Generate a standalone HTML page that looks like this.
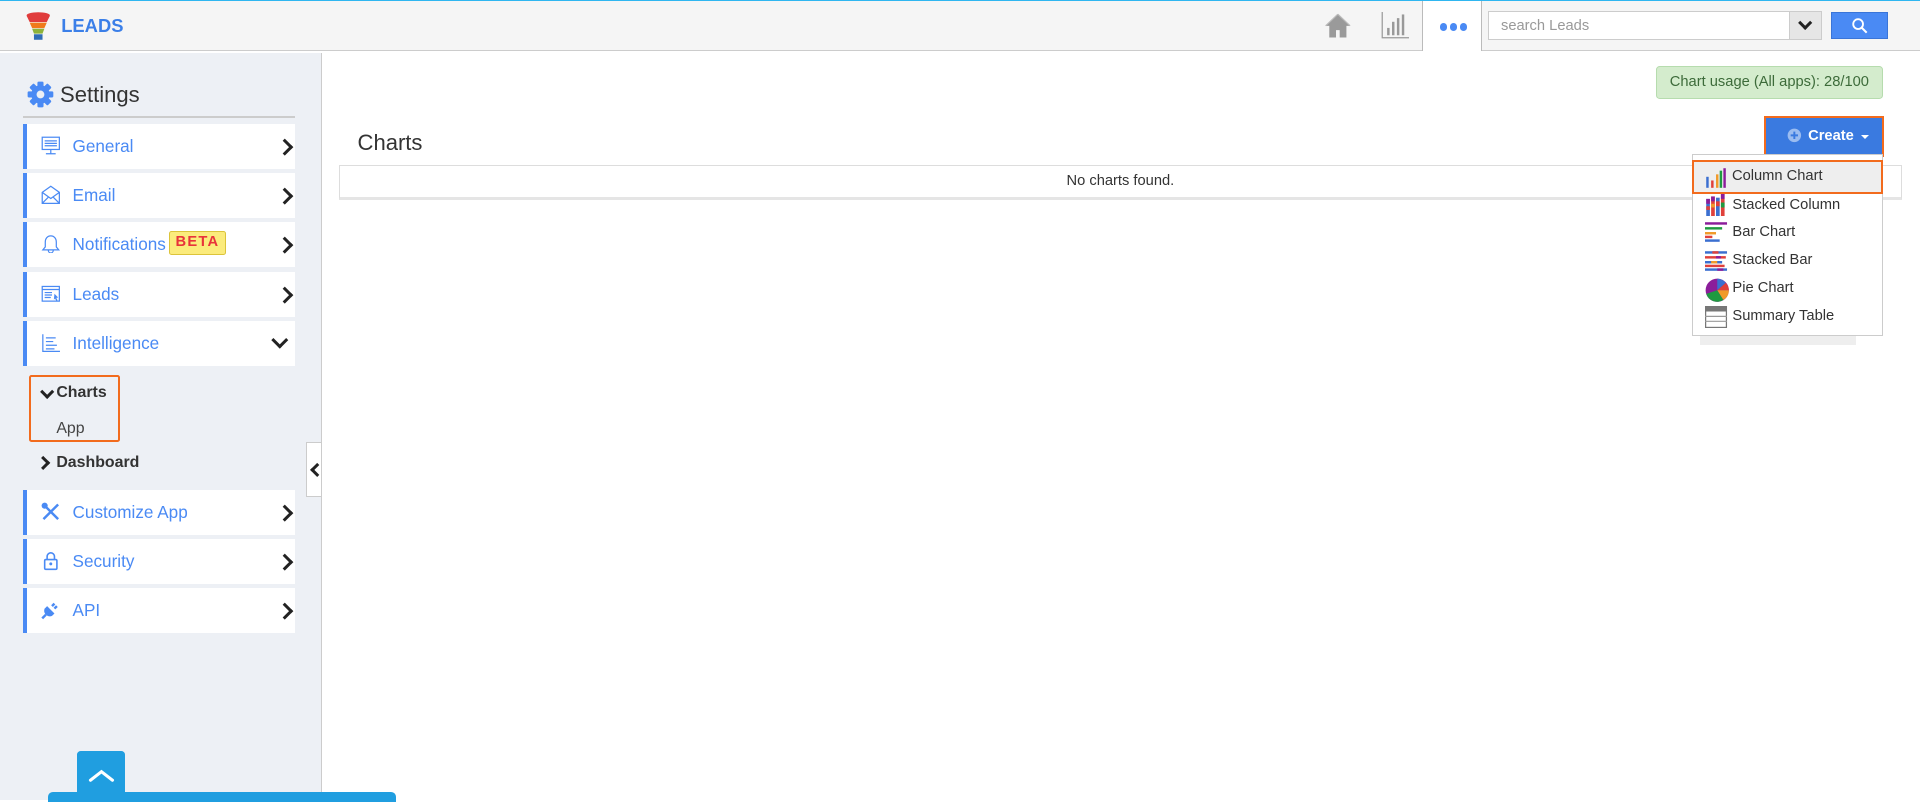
<!DOCTYPE html>
<html><head><meta charset="utf-8"><style>
html{zoom:1.22449}
body{margin:0;width:1568px;height:653px;overflow:hidden;position:relative;font-family:"Liberation Sans",Arial,sans-serif;background:#fff}
.a{position:absolute}
.top{left:0;top:0;width:1568px;height:42px;background:#f5f5f5;border-top:1px solid #2fb6f0;border-bottom:1px solid #ccc;box-sizing:border-box}
.side{left:0;top:43px;width:262px;height:610px;background:#edf0f5;border-right:1px solid #ccc}
.item{left:19px;width:222px;height:37px;background:#fff;box-sizing:border-box;border-left:4px solid #4a8af4}
.item span{position:absolute;left:37px;top:10px;font-size:14px;color:#4a8af4}
.item svg.ic{position:absolute;left:11px;top:10px}
.chev{position:absolute;right:4px;top:14px;width:7px;height:7px;border-right:2.5px solid #222;border-top:2.5px solid #222;transform:rotate(45deg)}
.chevd{position:absolute;right:8px;top:11px;width:7px;height:7px;border-right:2.5px solid #222;border-bottom:2.5px solid #222;transform:rotate(45deg)}
.dd div{position:absolute;left:0;width:156px;height:22px;font-size:12px;color:#333}
.dd div span{position:absolute;left:32px;top:4px}
.dd svg{position:absolute;left:10px;top:2px}
</style></head><body>
<div class="a top"></div>
<svg class="a" style="left:21px;top:9px" width="20" height="24" viewBox="0 0 20 24"><ellipse cx="10" cy="3.5" rx="9.5" ry="2.5" fill="#e03c3c"/><path d="M0.5 4h19l-2.5 5H3z" fill="#e03c3c"/><path d="M3 9.5h14l-2 4.5H5z" fill="#f07a1a"/><path d="M5 14.5h10l-1.5 4h-7z" fill="#8db33a"/><rect x="6.5" y="19" width="7" height="4.5" fill="#2f6db5"/></svg>
<div class="a" style="left:50px;top:12px;font-size:15px;font-weight:bold;color:#3b7fe8">LEADS</div>
<svg class="a" style="left:1082px;top:11px" width="21" height="20" viewBox="0 0 21 20"><path d="M10.5 1L0.5 10.5h3V20h5.5v-6h3v6H17.5v-9.5h3z" fill="#9a9a9a"/><path d="M10.5 1L0.5 10.5M10.5 1l10 9.5" stroke="#bbb" fill="none"/></svg>
<svg class="a" style="left:1128px;top:10px" width="23" height="22" viewBox="0 0 23 22"><path d="M1 0v21h22" stroke="#999" fill="none"/><rect x="5" y="13" width="2" height="6" fill="#999"/><rect x="9" y="8" width="2" height="11" fill="#999"/><rect x="13" y="5" width="2" height="14" fill="#999"/><rect x="17" y="2" width="2" height="17" fill="#999"/></svg>
<div class="a" style="left:1161px;top:1px;width:48px;height:41px;background:#fff;border-left:1px solid #bbb;border-right:1px solid #bbb"></div>
<div class="a" style="left:1176px;top:19px;font-size:0">
<span style="display:inline-block;width:6px;height:6px;border-radius:3px;background:#4a8af4;margin-right:2px"></span><span style="display:inline-block;width:6px;height:6px;border-radius:3px;background:#4a8af4;margin-right:2px"></span><span style="display:inline-block;width:6px;height:6px;border-radius:3px;background:#4a8af4"></span></div>
<div class="a" style="left:1215px;top:9px;width:273px;height:24px;background:#fff;border:1px solid #ccc;box-sizing:border-box"><span style="position:absolute;left:10px;top:5px;font-size:12px;color:#999">search Leads</span><div style="position:absolute;right:0;top:0;width:25px;height:22px;background:#e6e6e6;border-left:1px solid #ccc"><div style="position:absolute;left:8px;top:5px;width:6px;height:6px;border-right:2.5px solid #222;border-bottom:2.5px solid #222;transform:rotate(45deg)"></div></div></div>
<div class="a" style="left:1495px;top:10px;width:47px;height:22px;background:#4a8af4;border:1px solid #3a75d8;box-sizing:border-box"><svg style="position:absolute;left:17px;top:4px" width="13" height="13" viewBox="0 0 13 13"><circle cx="5" cy="5" r="4" stroke="#fff" stroke-width="1.5" fill="none"/><path d="M8 8l4 4" stroke="#fff" stroke-width="1.7"/></svg></div>

<div class="a side"></div>
<svg class="a" style="left:22px;top:66px" width="22" height="22" viewBox="0 0 22 22"><g fill="#4a8af4"><circle cx="11" cy="11" r="7.5"/><g id="t"><rect x="8.5" y="0.5" width="5" height="5" rx="1"/><rect x="8.5" y="16.5" width="5" height="5" rx="1"/></g><use href="#t" transform="rotate(45 11 11)"/><use href="#t" transform="rotate(90 11 11)"/><use href="#t" transform="rotate(135 11 11)"/></g><circle cx="11" cy="11" r="3.2" fill="#edf0f5"/></svg>
<div class="a" style="left:49px;top:67px;font-size:18px;color:#333">Settings</div>
<div class="a" style="left:19px;top:95px;width:222px;height:1px;background:#ccc"></div>

<div class="a item" style="top:101px"><svg class="ic" width="16" height="16" viewBox="0 0 16 16"><rect x="1" y="1" width="14" height="10" fill="none" stroke="#4a8af4"/><path d="M3 4h10M3 6h10M3 8h10M8 11v3M4 14.5h8" stroke="#4a8af4"/></svg><span>General</span><i class="chev"></i></div>
<div class="a item" style="top:141px"><svg class="ic" width="16" height="16" viewBox="0 0 16 16"><path d="M1 6l7-5 7 5v9H1zM1 6l7 5 7-5M1 15l5-5M15 15l-5-5" fill="none" stroke="#4a8af4"/></svg><span>Email</span><i class="chev"></i></div>
<div class="a item" style="top:181px"><svg class="ic" width="16" height="16" viewBox="0 0 16 16"><path d="M8 1.5c-3 0-4.5 2.5-4.5 5v4L1.5 13h13l-2-2.5v-4c0-2.5-1.5-5-4.5-5zM6 13.5a2 2 0 0 0 4 0" fill="none" stroke="#4a8af4"/></svg><span>Notifications</span><div style="position:absolute;left:116px;top:8px;width:46px;height:19px;background:#fbeb7c;border:1px solid #dcc43a;border-radius:2px;box-sizing:border-box;font-size:12px;font-weight:bold;color:#e8333a;text-align:center;line-height:17px;letter-spacing:1px">BETA</div><i class="chev"></i></div>
<div class="a item" style="top:222px"><svg class="ic" width="16" height="16" viewBox="0 0 16 16"><rect x="1" y="2" width="14" height="12" fill="none" stroke="#4a8af4"/><path d="M1 4.5h14M3 7h6M3 9h6M3 11h5" stroke="#4a8af4"/><path d="M11 8l3 3-1.5 .3 1 2-1 .5-1-2-1 1z" fill="#4a8af4"/></svg><span>Leads</span><i class="chev"></i></div>
<div class="a item" style="top:262px"><svg class="ic" width="16" height="16" viewBox="0 0 16 16"><path d="M1.5 1v14h14M4 4h8M4 7h6M4 10h9M4 13h7" fill="none" stroke="#4a8af4"/></svg><span>Intelligence</span><i class="chevd"></i></div>

<div class="a" style="left:24px;top:306px;width:71px;height:52px;border:2px solid #f26b1d;border-radius:2px"></div>
<div class="a" style="left:34px;top:316px;width:6px;height:6px;border-right:2.5px solid #222;border-bottom:2.5px solid #222;transform:rotate(45deg)"></div>
<div class="a" style="left:46px;top:314px;font-size:13px;font-weight:bold;color:#333">Charts</div>
<div class="a" style="left:46px;top:343px;font-size:13px;color:#444">App</div>
<div class="a" style="left:31px;top:374px;width:6px;height:6px;border-right:2.5px solid #222;border-top:2.5px solid #222;transform:rotate(45deg)"></div>
<div class="a" style="left:46px;top:371px;font-size:13px;font-weight:bold;color:#333">Dashboard</div>

<div class="a item" style="top:400px"><svg class="ic" width="16" height="16" viewBox="0 0 16 16"><path d="M2 2l12 12M14 2L2 14" stroke="#4a8af4" stroke-width="2"/><circle cx="3" cy="3" r="2.5" fill="#4a8af4"/></svg><span>Customize App</span><i class="chev"></i></div>
<div class="a item" style="top:440px"><svg class="ic" width="16" height="16" viewBox="0 0 16 16"><path d="M5 7V4.5a3 3 0 0 1 6 0V7" fill="none" stroke="#4a8af4" stroke-width="1.3"/><rect x="3" y="7" width="10" height="8" rx="1" fill="none" stroke="#4a8af4" stroke-width="1.3"/><circle cx="8" cy="10.5" r="1.2" fill="#4a8af4"/></svg><span>Security</span><i class="chev"></i></div>
<div class="a item" style="top:480px"><svg class="ic" width="16" height="16" viewBox="0 0 16 16"><path d="M5 5l6 6-2 2c-2 1-4 0-5-1s-2-3-1-5z" fill="#4a8af4"/><path d="M9 5l2-2M11 7l2-2M4 12l-3 3" stroke="#4a8af4" stroke-width="2"/></svg><span>API</span><i class="chev"></i></div>

<div class="a" style="left:250px;top:361px;width:11px;height:43px;background:#fff;border:1px solid #ccc;border-right:0"><div style="position:absolute;left:4px;top:18px;width:6px;height:6px;border-left:2.5px solid #222;border-bottom:2.5px solid #222;transform:rotate(45deg)"></div></div>

<div class="a" style="left:63px;top:613px;width:39px;height:40px;background:#209ee0;border-radius:3px 3px 0 0"><svg style="position:absolute;left:9px;top:14px" width="22" height="12" viewBox="0 0 22 12"><path d="M2 10l9-7 9 7" stroke="#fff" stroke-width="2.5" fill="none" stroke-linecap="round"/></svg></div>
<div class="a" style="left:39px;top:647px;width:284px;height:8px;background:#209ee0;border-radius:4px 4px 0 0"></div>

<div class="a" style="left:1352px;top:54px;width:186px;height:27px;background:#d4eccd;border:1px solid #b6dcae;border-radius:3px;box-sizing:border-box;font-size:12px;color:#3d6b3a;text-align:center;line-height:25px">Chart usage (All apps): 28/100</div>
<div class="a" style="left:292px;top:106px;font-size:18px;color:#333">Charts</div>
<div class="a" style="left:277px;top:135px;width:1276px;height:28px;border:1px solid #ddd;border-bottom:3px solid #e5e5e5;box-sizing:border-box;font-size:12px;color:#333;text-align:center;line-height:26px">No charts found.</div>

<div class="a" style="left:1441px;top:95px;width:98px;height:33px;border:2px solid #f26b1d;box-sizing:border-box;background:#3a7ae0"><svg style="position:absolute;left:17px;top:8px" width="12" height="12" viewBox="0 0 12 12"><circle cx="6" cy="6" r="5.5" fill="#9bbcf0"/><path d="M6 3v6M3 6h6" stroke="#3a7ae0" stroke-width="1.6"/></svg><span style="position:absolute;left:34px;top:8px;font-size:12px;font-weight:bold;color:#fff">Create</span><span style="position:absolute;left:77px;top:14px;border-left:3.5px solid transparent;border-right:3.5px solid transparent;border-top:4px solid #fff"></span></div>

<div class="a" style="left:1388px;top:132px;width:128px;height:150px;background:#eee"></div>
<div class="a dd" style="left:1382px;top:126px;width:156px;height:148px;background:#fff;border:1px solid #ccc;box-sizing:border-box">
<div style="top:4px;left:-1px;width:156px;height:28px;background:#eee;border:2px solid #f26b1d;box-sizing:border-box"><svg style="left:9px;top:4px" width="18" height="18" viewBox="0 0 18 18"><rect x="1" y="8" width="2" height="9" fill="#3b6fd0"/><rect x="5" y="11" width="2" height="6" fill="#e0403a"/><rect x="9" y="6" width="2" height="11" fill="#f09a2a"/><rect x="12" y="3" width="2" height="14" fill="#1f9a40"/><rect x="15" y="1" width="2" height="16" fill="#8b1d9a"/></svg><span style="left:31px;top:5px">Column Chart</span></div>
<div style="top:30px"><svg width="18" height="18" viewBox="0 0 18 18"><g><rect x="1" y="4" width="3" height="14" fill="#3b6fd0"/><rect x="1" y="4" width="3" height="4" fill="#8b1d9a"/><rect x="1" y="10" width="3" height="3" fill="#e0403a"/><rect x="5" y="2" width="3" height="16" fill="#e0403a"/><rect x="5" y="2" width="3" height="4" fill="#8b1d9a"/><rect x="5" y="8" width="3" height="3" fill="#f09a2a"/><rect x="9" y="3" width="3" height="15" fill="#3b6fd0"/><rect x="9" y="6" width="3" height="4" fill="#e0403a"/><rect x="13" y="0" width="3" height="18" fill="#e0403a"/><rect x="13" y="0" width="3" height="4" fill="#8b1d9a"/><rect x="13" y="7" width="3" height="4" fill="#1f9a40"/></g></svg><span>Stacked Column</span></div>
<div style="top:52px"><svg width="18" height="18" viewBox="0 0 18 18"><rect x="0" y="1" width="18" height="2" fill="#8b1d9a"/><rect x="0" y="5" width="14" height="2" fill="#1f9a40"/><rect x="0" y="9" width="9" height="2" fill="#f09a2a"/><rect x="0" y="12" width="6" height="2" fill="#e0403a"/><rect x="0" y="15" width="12" height="2" fill="#3b6fd0"/></svg><span>Bar Chart</span></div>
<div style="top:75px"><svg width="18" height="18" viewBox="0 0 18 18"><rect x="0" y="1" width="18" height="2" fill="#3b6fd0"/><rect x="6" y="1" width="5" height="2" fill="#e0403a"/><rect x="0" y="5" width="17" height="2" fill="#e0403a"/><rect x="9" y="5" width="4" height="2" fill="#8b1d9a"/><rect x="0" y="9" width="14" height="2" fill="#3b6fd0"/><rect x="5" y="9" width="5" height="2" fill="#f09a2a"/><rect x="0" y="12" width="16" height="2" fill="#e0403a"/><rect x="0" y="15" width="18" height="2" fill="#3b6fd0"/><rect x="10" y="15" width="5" height="2" fill="#8b1d9a"/></svg><span>Stacked Bar</span></div>
<div style="top:98px"><svg width="20" height="20" viewBox="0 0 20 20"><circle cx="10" cy="10" r="9.5" fill="#8b1d9a"/><path d="M10 10V0.5A9.5 9.5 0 0 1 17 4z" fill="#3b6fd0"/><path d="M10 10L17 4A9.5 9.5 0 0 1 19.5 10z" fill="#e0403a"/><path d="M10 10h9.5A9.5 9.5 0 0 1 15 18z" fill="#f09a2a"/><path d="M10 10l5 8A9.5 9.5 0 0 1 1 13z" fill="#1f9a40"/></svg><span>Pie Chart</span></div>
<div style="top:121px"><svg width="18" height="18" viewBox="0 0 18 18"><rect x="0.5" y="0.5" width="17" height="17" fill="#fff" stroke="#777"/><rect x="0.5" y="0.5" width="17" height="4" fill="#777"/><path d="M0 8.5h18M0 12.5h18" stroke="#999"/></svg><span>Summary Table</span></div>
</div>
</body></html>
